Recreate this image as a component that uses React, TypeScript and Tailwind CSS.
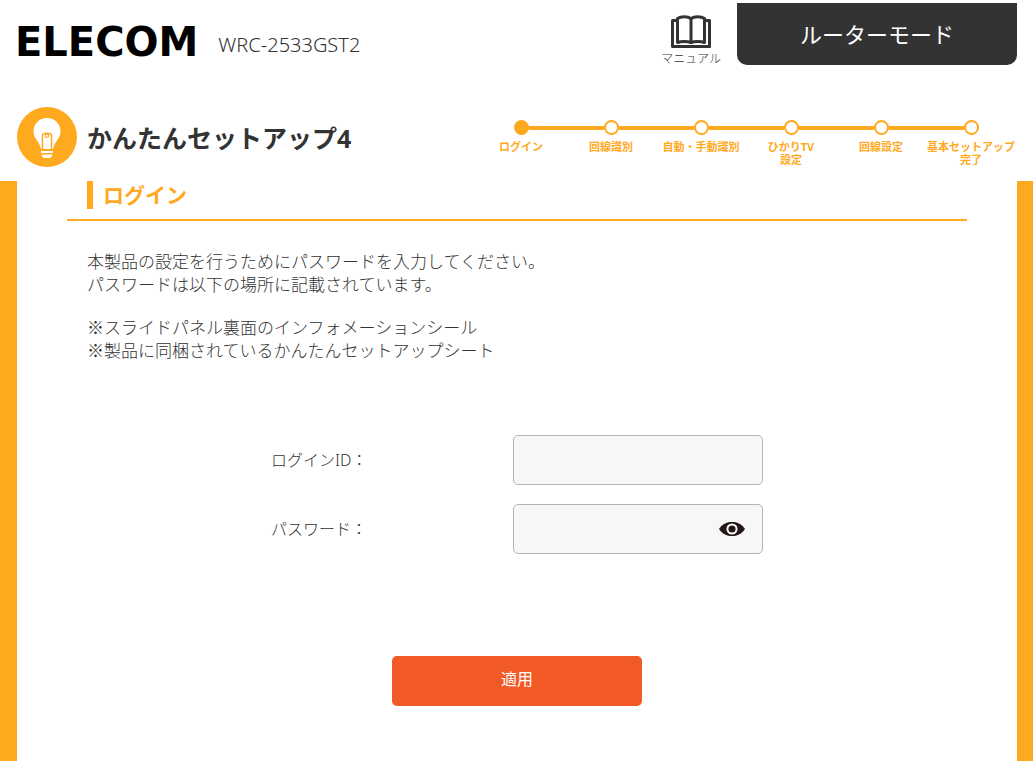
import { useState } from "react"

interface Step {
  label: string
  note?: string
}

const steps: Step[] = [
  { label: "ログイン" },
  { label: "回線識別" },
  { label: "自動・手動識別" },
  { label: "ひかりTV", note: "設定" },
  { label: "回線設定" },
  { label: "基本セットアップ", note: "完了" },
]

function BookIcon() {
  return (
    <svg width="40" height="34" viewBox="0 0 40 34" fill="none" stroke="#333333" aria-hidden="true">
      <path d="M6 5.5H1.5V31.5H38.5V5.5H34" strokeWidth="3" strokeLinejoin="round" />
      <path d="M6.5 3.5C10 1 16.5 1 20 3.5C23.5 1 30 1 33.5 3.5V27.5C30 26 23.5 26 20 27.5C16.5 26 10 26 6.5 27.5Z" strokeWidth="3" strokeLinejoin="round" />
      <path d="M20 4V28" strokeWidth="3" />
    </svg>
  )
}

function BulbIcon() {
  return (
    <svg width="60" height="60" viewBox="0 0 60 60" className="shrink-0" aria-hidden="true">
      <circle cx="30" cy="30" r="30" fill="#ffa91f" />
      <path d="M30 11C22 11 16.5 17 16.5 24.5C16.5 32 22.5 34 24 42H36C37.5 34 43.5 32 43.5 24.5C43.5 17 38 11 30 11Z" fill="#fff" />
      <path d="M25.5 42V28.5C25.5 25.5 34.5 25.5 34.5 28.5V42" fill="none" stroke="#ffa91f" strokeWidth="1.5" />
      <circle cx="30" cy="28.8" r="1.7" fill="none" stroke="#ffa91f" strokeWidth="1.2" />
      <path d="M24 44H36V46H24ZM24.5 47.5H35.5C35 49.5 34 51 32 51H28C26 51 25 49.5 24.5 47.5Z" fill="#fff" />
    </svg>
  )
}

function EyeIcon() {
  return (
    <svg width="26" height="16" viewBox="0 0 26 16" aria-hidden="true">
      <path d="M0 8C4 2.5 8 1 13 1S22 2.5 26 8C22 13.5 18 15 13 15S4 13.5 0 8Z" fill="#231815" />
      <circle cx="13" cy="8" r="4.6" fill="#231815" stroke="#fff" strokeWidth="2" />
    </svg>
  )
}

function Stepper({ current }: { current: number }) {
  return (
    <ol className="flex w-[540px] shrink-0 text-[#ffa91f]">
      {steps.map((step, i) => (
        <li key={step.label} className="flex-1">
          <div className="flex items-center">
            <span className={`h-1 flex-1 ${i > 0 ? "bg-[#ffa91f]" : ""}`} />
            <span
              className={`size-[15px] rounded-full border-2 border-[#ffa91f] ${i === current ? "bg-[#ffa91f]" : "bg-white"}`}
            />
            <span className={`h-1 flex-1 ${i < steps.length - 1 ? "bg-[#ffa91f]" : ""}`} />
          </div>
          <p className="mt-[5px] text-center text-[11px] leading-[13px] font-bold whitespace-nowrap">
            {step.label}
            {step.note && (
              <>
                <br />
                {step.note}
              </>
            )}
          </p>
        </li>
      ))}
    </ol>
  )
}

const inputClass = "block h-[50px] w-full rounded-[5px] border border-[#b3b3b3] bg-[#f7f7f7] px-3 outline-none"

export default function App() {
  const [showPassword, setShowPassword] = useState(false)

  return (
    <div lang="ja" className="flex min-h-screen flex-col bg-white font-['Noto_Sans','Noto_Sans_CJK_JP',sans-serif] text-[#333333]">
      <header className="flex items-start pt-[3px] pr-4 pl-[15px]">
        <div className="flex items-center gap-5 pt-4">
          <span className="font-['DejaVu_Sans',sans-serif] text-[40px] leading-[46px] font-bold text-black">
            ELECOM
          </span>
          <span className="pt-1.5 text-[20px] leading-7 font-light">WRC-2533GST2</span>
        </div>
        <a href="#manual" className="mt-3 ml-auto flex flex-col items-center text-xs leading-5 font-light">
          <BookIcon />
          マニュアル
        </a>
        <div className="ml-4 flex h-[62px] w-[280px] items-center justify-center rounded-b-[10px] bg-[#333333] text-[22px] text-white">
          ルーターモード
        </div>
      </header>

      <div className="mt-[38px] flex items-start justify-between px-[17px]">
        <div className="flex items-center gap-[10px]">
          <BulbIcon />
          <h1 className="pt-1 text-[25px] font-bold whitespace-nowrap">かんたんセットアップ4</h1>
        </div>
        <div className="pt-[13px]">
          <Stepper current={0} />
        </div>
      </div>

      <main className="mt-[14px] flex-1 border-r-[16px] border-l-[17px] border-[#ffa91f] px-[50px] pb-12">
        <div className="border-b-2 border-[#ffa91f] px-5 pb-[10px]">
          <h2 className="border-l-[6px] border-[#ffa91f] pl-[10px] text-[21px] leading-7 font-bold text-[#ffa91f]">
            ログイン
          </h2>
        </div>

        <div className="mt-7 space-y-5 px-5 font-['Noto_Sans_CJK_JP',sans-serif] text-[17px] leading-[23px] font-light">
          <p>
            本製品の設定を行うためにパスワードを入力してください。
            <br />
            パスワードは以下の場所に記載されています。
          </p>
          <p>
            ※スライドパネル裏面のインフォメーションシール
            <br />
            ※製品に同梱されているかんたんセットアップシート
          </p>
        </div>

        <form
          className="mx-auto mt-[74px] flex max-w-[492px] flex-col text-base font-light"
          onSubmit={(e) => e.preventDefault()}
        >
          <div className="flex items-center justify-between">
            <label htmlFor="login-id">ログインID：</label>
            <div className="w-[250px]">
              <input id="login-id" type="text" className={inputClass} />
            </div>
          </div>
          <div className="mt-[19px] flex items-center justify-between">
            <label htmlFor="password">パスワード：</label>
            <div className="relative w-[250px]">
              <input id="password" type={showPassword ? "text" : "password"} className={inputClass} />
              <button
                type="button"
                aria-label="パスワードを表示"
                className="absolute inset-y-0 right-[18px] flex items-center"
                onClick={() => setShowPassword(!showPassword)}
              >
                <EyeIcon />
              </button>
            </div>
          </div>
          <button
            type="submit"
            className="mt-[102px] h-[50px] w-[250px] self-center rounded-[5px] bg-[#f15a24] pb-1 font-normal text-white"
          >
            適用
          </button>
        </form>
      </main>
    </div>
  )
}
